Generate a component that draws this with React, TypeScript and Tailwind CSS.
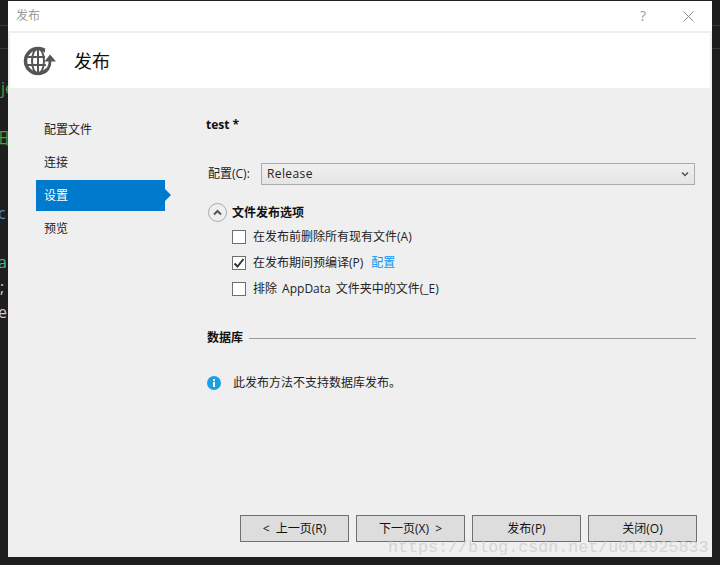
import React from "react";

const font = { fontFamily: '"Open Sans","Noto Sans CJK SC",sans-serif' };

function Globe() {
  return (
    <svg width="34" height="30" viewBox="0 0 34 30" fill="none">
      <circle cx="15" cy="15" r="12.500" stroke="#555" strokeWidth="3.500" />
      <ellipse cx="15" cy="15" rx="6" ry="12.500" stroke="#555" strokeWidth="2" />
      <path d="M3 11H27M3 19H27M15 2V28" stroke="#555" strokeWidth="2" />
      <path d="M18 30L24 24L22 15L22 3H34V30z" fill="#fff" />
      <path d="M19 27C24 26 27.500 21 27 14" stroke="#555" strokeWidth="2.800" />
      <path d="M21.500 15.500L27 8.500L33 15.500z" fill="#555" />
    </svg>
  );
}

function Check({ checked, label, extra }: { checked?: boolean; label: string; extra?: boolean }) {
  return (
    <div className="flex h-[26px] items-center">
      <div className="flex h-[14px] w-[14px] items-center justify-center border border-[#6f6f6f] bg-white">
        {checked && (
          <svg width="12" height="12" viewBox="0 0 12 12" fill="none">
            <path d="M1.500 6.500L4.500 9.500L10.500 2" stroke="#333" strokeWidth="2" />
          </svg>
        )}
      </div>
      <span className="ml-[7px] text-xs text-[#222] [word-spacing:2px]">{label}</span>
      {extra && <span className="ml-2 text-xs text-[#0a97f0]">配置</span>}
    </div>
  );
}

function Btn({ children }: { children: React.ReactNode }) {
  return (
    <div className="flex h-[27px] w-[109px] items-center justify-center border border-[#707070] bg-[#dddddd] text-xs text-[#111] [word-spacing:3px]">
      {children}
    </div>
  );
}

function NavItem({ label }: { label: string }) {
  return <div className="flex h-[33px] items-center pl-2 text-xs text-[#222]">{label}</div>;
}

function ActiveNavItem({ label }: { label: string }) {
  return (
    <div className="flex h-[33px] items-center">
      <div className="relative flex h-[31px] w-full items-center bg-[#007acc] pl-2 text-xs text-white">
        {label}
        <span className="absolute left-full top-[9px] h-0 w-0 border-y-[6px] border-l-[6px] border-y-transparent border-l-[#007acc]" />
      </div>
    </div>
  );
}

export default function App() {
  return (
    <div className="relative h-[565px] w-[720px] overflow-hidden bg-[#1e1e1e]" style={font}>
      {/* editor peeking out behind the dialog */}
      <div className="absolute left-0 top-[25px] h-px w-2 bg-[#3a3a3a]" />
      <div className="absolute left-0 top-[48px] h-px w-2 bg-[#3a3a3a]" />
      <div className="absolute right-0 top-[25px] h-px w-2 bg-[#3a3a3a]" />
      <div className="absolute right-0 top-[48px] h-px w-2 bg-[#3a3a3a]" />
      <span className="absolute left-px top-[76px] text-base text-[#4e9a3a]">je</span>
      <span className="absolute -left-[7px] top-[126px] text-base text-[#4e9a3a]">田</span>
      <span className="absolute -left-[2px] top-[201px] text-base text-[#4a8fd0]">c</span>
      <span className="absolute -left-[2px] top-[250px] text-base text-[#3fb8a0]">a</span>
      <span className="absolute left-0 top-[275px] text-base text-[#cccccc]">;</span>
      <span className="absolute -left-[2px] top-[300px] text-base text-[#cccccc]">e</span>

      {/* dialog */}
      <div className="absolute left-2 top-px flex h-[556px] w-[704px] flex-col bg-[#efefef]">
        <div className="flex h-[30px] shrink-0 items-center justify-between bg-white pl-2 pr-[18px]">
          <span className="text-xs text-[#999]">发布</span>
          <div className="flex items-center gap-[37px]">
            <span className="text-sm text-[#999]">?</span>
            <svg width="11" height="11" viewBox="0 0 11 11" fill="none">
              <path d="M0.500 0.500L10.500 10.500M10.500 0.500L0.500 10.500" stroke="#888" />
            </svg>
          </div>
        </div>

        <div className="mx-[2px] mt-[2px] flex h-[55px] shrink-0 items-center gap-[17px] bg-white pl-[13px]">
          <Globe />
          <span className="text-lg text-[#111]">发布</span>
        </div>

        <div className="flex min-h-0 flex-1">
          <div className="ml-7 mt-[25px] w-[129px] shrink-0">
            <NavItem label="配置文件" />
            <NavItem label="连接" />
            <ActiveNavItem label="设置" />
            <NavItem label="预览" />
          </div>

          <div className="ml-[42px] flex w-[489px] flex-col">
            <div className="-ml-px mt-[28px] h-[18px] text-xs font-bold leading-[18px] text-[#111]">test *</div>

            <div className="ml-px mt-[29px] flex items-center">
              <span className="w-[53px] text-xs text-[#222]">配置(C):</span>
              <div className="flex h-[22px] w-[434px] items-center justify-between border border-[#acacac] bg-gradient-to-b from-[#f0f0f0] to-[#e5e5e5] pl-[5px] pr-[5px] text-xs tracking-[0.4px] text-[#222]">
                <span>Release</span>
                <svg width="8" height="6" viewBox="0 0 8 6" fill="none">
                  <path d="M1 1.500L4 4.500L7 1.500" stroke="#555" strokeWidth="1.500" />
                </svg>
              </div>
            </div>

            <div className="ml-px mt-[18px] flex items-center">
              <div className="flex h-[19px] w-[19px] items-center justify-center rounded-full border border-[#aaaaaa]">
                <svg width="9" height="7" viewBox="0 0 9 7" fill="none">
                  <path d="M1 5.500L4.500 2L8 5.500" stroke="#555" strokeWidth="2" />
                </svg>
              </div>
              <span className="ml-[5px] text-xs font-bold text-[#111]">文件发布选项</span>
            </div>

            <div className="ml-[25px] mt-[2px] flex flex-col">
              <Check label="在发布前删除所有现有文件(A)" />
              <Check checked label="在发布期间预编译(P)" extra />
              <Check label="排除 AppData 文件夹中的文件(_E)" />
            </div>

            <div className="mt-[28px] flex items-center">
              <span className="text-xs font-bold text-[#111]">数据库</span>
              <div className="ml-[6px] h-px flex-1 bg-[#999999]" />
            </div>

            <div className="mt-[29px] flex items-center">
              <svg width="14" height="14" viewBox="0 0 14 14">
                <circle cx="7" cy="7" r="7" fill="#1ba1e2" />
                <rect x="6" y="6" width="2" height="5" fill="#fff" />
                <rect x="6" y="3" width="2" height="2" fill="#fff" />
              </svg>
              <span className="ml-3 text-xs text-[#222]">此发布方法不支持数据库发布。</span>
            </div>
          </div>
        </div>

        <div className="mb-[15px] mr-[15px] flex shrink-0 justify-end gap-[7px]">
          <Btn>&lt; 上一页(R)</Btn>
          <Btn>下一页(X) &gt;</Btn>
          <Btn>发布(P)</Btn>
          <Btn>关闭(O)</Btn>
        </div>
      </div>

      {/* watermark */}
      <span
        className="absolute left-[388px] top-[535px] whitespace-nowrap text-[16.700px] text-[#c8c8c8]/70"
        style={{ fontFamily: '"Liberation Mono",monospace' }}
      >
        https://blog.csdn.net/u012925833
      </span>
    </div>
  );
}
